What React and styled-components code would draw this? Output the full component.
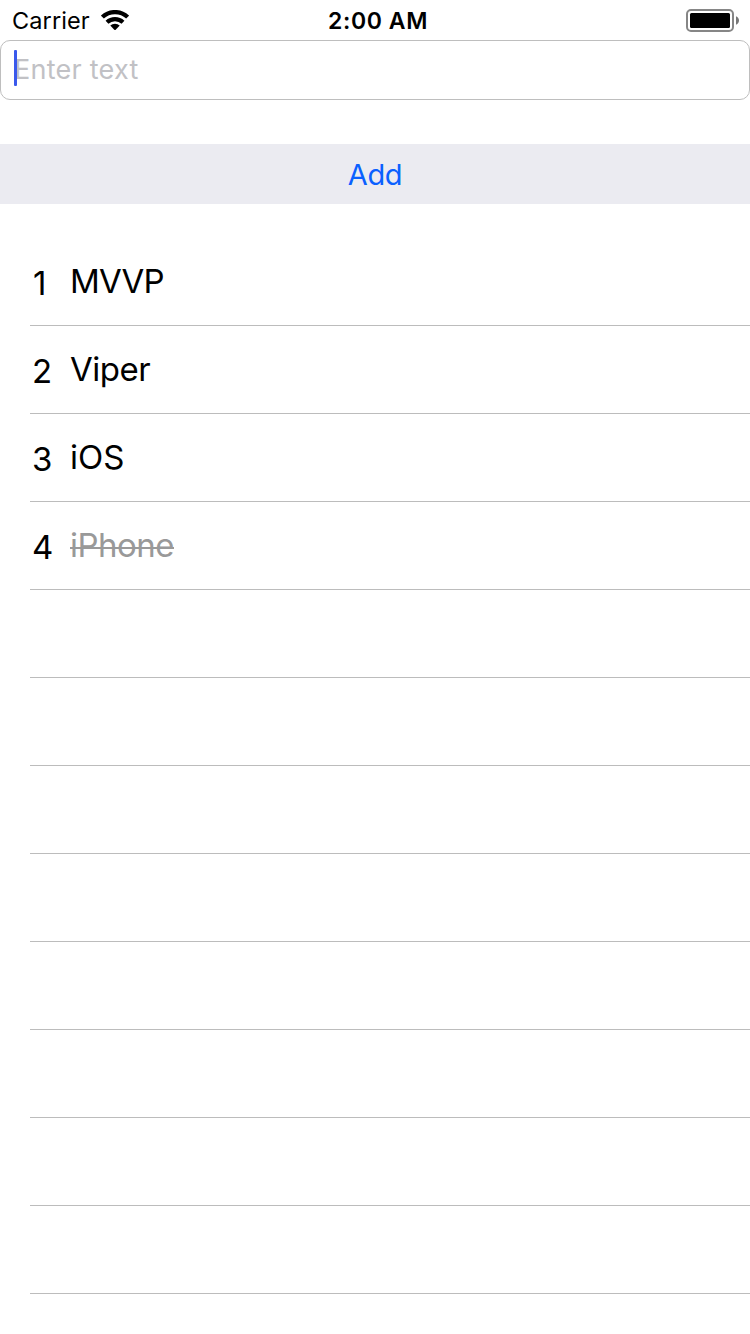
import React from 'react';
import styled, { createGlobalStyle } from 'styled-components';

const GlobalStyle = createGlobalStyle`
  *, *::before, *::after { box-sizing: border-box; }
  body {
    margin: 0;
    background: #fff;
    color: #000;
    font-family: Inter, "Liberation Sans", sans-serif;
  }
`;

const Screen = styled.main`
  display: flex;
  flex-direction: column;
  width: 750px;
  height: 1334px;
  overflow: hidden;
  background: #fff;
`;

const StatusBar = styled.header`
  display: grid;
  grid-template-columns: 1fr auto 1fr;
  align-items: center;
  height: 40px;
  padding: 0 11px 0 12px;
  line-height: 38px;
`;

const Carrier = styled.div`
  display: flex;
  align-items: center;
  gap: 11px;
  padding-top: 2px;
  font-size: 23.5px;
  letter-spacing: 0.1px;
`;

const WifiMark = styled.svg`
  margin-top: -2px;
`;

const Clock = styled.time`
  padding: 2px 0 0 5px;
  font-size: 23px;
  font-weight: 600;
  letter-spacing: 0.6px;
`;

const BatterySlot = styled.div`
  display: flex;
  justify-content: flex-end;
`;

const TextField = styled.div`
  display: flex;
  align-items: flex-start;
  height: 60px;
  padding: 9px 13px 0;
  border: 1px solid #bebebe;
  border-radius: 10px;
`;

const Caret = styled.span`
  z-index: 1;
  width: 3px;
  height: 36px;
  margin-right: -3px;
  border-radius: 1px;
  background: #3a59ec;
`;

const Placeholder = styled.span`
  color: #c1c1c5;
  font-size: 27px;
  line-height: 40px;
  letter-spacing: 0.25px;
`;

const AddButton = styled.button`
  height: 60px;
  margin: 44px 0 34px;
  padding: 2px 0 0;
  border: 0;
  background: #ebebf1;
  color: #0a60ff;
  font: 400 29px/58px Inter, "Liberation Sans", sans-serif;
  letter-spacing: -0.3px;
`;

const List = styled.ul`
  margin: 0;
  padding: 0 0 0 30px;
  list-style: none;
`;

const Row = styled.li`
  display: flex;
  height: 88px;
  border-bottom: 1px solid #bcbcbc;
  font-size: 33px;
`;

const Index = styled.span`
  width: 40px;
  padding-left: ${({ $inset }) => $inset}px;
  line-height: 90px;
`;

const Title = styled.span`
  position: relative;
  line-height: 86px;
  color: ${({ $done }) => ($done ? '#999' : '#000')};
  letter-spacing: ${({ $tracking }) => $tracking}px;

  &::after {
    content: '';
    display: ${({ $done }) => ($done ? 'block' : 'none')};
    position: absolute;
    top: 45px;
    left: 0;
    right: 0;
    height: 2px;
    background: #999;
  }
`;

const items = [
  { title: 'MVVP', tracking: -0.75, inset: 3 },
  { title: 'Viper', tracking: -0.5, inset: 2 },
  { title: 'iOS', tracking: 0, inset: 2 },
  { title: 'iPhone', tracking: -0.5, inset: 2, done: true },
];
const rows = Array.from({ length: 12 }, (_, i) => items[i]);

function WifiIcon() {
  return (
    <WifiMark width="28" height="20" viewBox="0 0 28 20" aria-hidden="true">
      <g fill="none" stroke="#000" strokeWidth="4.2">
        <path d="M1.4 7.1a18.2 18.2 0 0 1 25.2 0" />
        <path d="M6 12.2a11.7 11.7 0 0 1 16 0" />
      </g>
      <path d="M9.3 15.6a6.8 6.8 0 0 1 9.4 0L14.7 19.7Q14 20.3 13.3 19.7z" />
    </WifiMark>
  );
}

function BatteryIcon() {
  return (
    <svg width="53" height="23" viewBox="0 0 53 23" aria-hidden="true">
      <rect x="1" y="1" width="46" height="21" rx="4" fill="none" stroke="#868686" strokeWidth="2" />
      <rect x="4" y="4" width="40" height="15" rx="1.5" />
      <path d="M50 7.3c4 1.5 4 6.9 0 8.4z" fill="#777" />
    </svg>
  );
}

export default function App() {
  return (
    <Screen>
      <GlobalStyle />
      <StatusBar>
        <Carrier>Carrier<WifiIcon /></Carrier>
        <Clock>2:00 AM</Clock>
        <BatterySlot><BatteryIcon /></BatterySlot>
      </StatusBar>
      <TextField>
        <Caret />
        <Placeholder>Enter text</Placeholder>
      </TextField>
      <AddButton type="button">Add</AddButton>
      <List>
        {rows.map((item, i) => (
          <Row key={i}>
            {item && (
              <>
                <Index $inset={item.inset}>{i + 1}</Index>
                <Title $done={item.done} $tracking={item.tracking}>{item.title}</Title>
              </>
            )}
          </Row>
        ))}
      </List>
    </Screen>
  );
}
